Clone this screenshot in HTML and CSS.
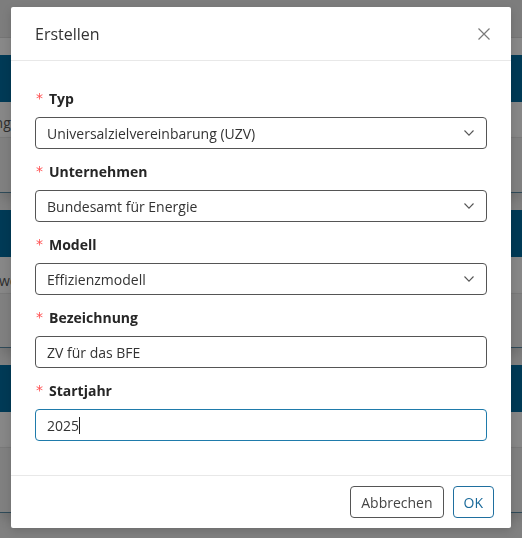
FILE: index.html
```html
<!DOCTYPE html>
<html lang="de">
<head>
<meta charset="utf-8">
<link rel="stylesheet" href="styles.css">
</head>
<body>
<div class="page">
  <div class="band top"></div>
  <div class="band light"></div>
  <div class="bar"></div>
  <div class="row"><span class="rowtext">Vereinbarung</span></div>
  <div class="band filler"></div>
  <div class="bar"></div>
  <div class="row r2"><span class="rowtext t2">Bewertung</span></div>
  <div class="band filler f2"></div>
  <div class="bar"></div>
  <div class="row"></div>
  <div class="band filler last"></div>
</div>

<div class="overlay">
  <div class="dialog">
    <div class="dlg-header">
      <span class="dlg-title">Erstellen</span>
      <svg class="close" width="12" height="12" viewBox="0 0 12 12"><path d="M0.5 0.5 L11.5 11.5 M11.5 0.5 L0.5 11.5" stroke="#7a7a7a" stroke-width="1.2" fill="none"/></svg>
    </div>
    <div class="dlg-body">
      <div class="item">
        <div class="label"><span class="req">*</span>Typ</div>
        <div class="field select">
          <span>Universalzielvereinbarung (UZV)</span>
          <svg class="chev" width="10" height="6" viewBox="0 0 10 6"><path d="M0.5 0.5 L5 5.2 L9.5 0.5" stroke="#555" stroke-width="1.1" fill="none"/></svg>
        </div>
      </div>
      <div class="item">
        <div class="label"><span class="req">*</span>Unternehmen</div>
        <div class="field select">
          <span>Bundesamt für Energie</span>
          <svg class="chev" width="10" height="6" viewBox="0 0 10 6"><path d="M0.5 0.5 L5 5.2 L9.5 0.5" stroke="#555" stroke-width="1.1" fill="none"/></svg>
        </div>
      </div>
      <div class="item">
        <div class="label"><span class="req">*</span>Modell</div>
        <div class="field select">
          <span>Effizienzmodell</span>
          <svg class="chev" width="10" height="6" viewBox="0 0 10 6"><path d="M0.5 0.5 L5 5.2 L9.5 0.5" stroke="#555" stroke-width="1.1" fill="none"/></svg>
        </div>
      </div>
      <div class="item">
        <div class="label"><span class="req">*</span>Bezeichnung</div>
        <div class="field"><span>ZV für das BFE</span></div>
      </div>
      <div class="item">
        <div class="label"><span class="req">*</span>Startjahr</div>
        <div class="field focused"><span>2025</span><span class="caret"></span></div>
      </div>
    </div>
    <div class="dlg-footer">
      <button class="btn">Abbrechen</button>
      <button class="btn primary">OK</button>
    </div>
  </div>
</div>
</body>
</html>
```
FILE: styles.css
```css
html, body {
  margin: 0;
  padding: 0;
}
body {
  width: 522px;
  height: 538px;
  overflow: hidden;
  font-family: "Open Sans", "Noto Sans", sans-serif;
  background: #808080;
}
.page {
  display: flex;
  flex-direction: column;
}
.band.top {
  height: 37px;
  background: #7d7d7d;
  border-bottom: 1px solid #757575;
}
.band.light {
  height: 17px;
  background: #888888;
}
.bar {
  height: 47px;
  background: #003a56;
}
.row {
  height: 36px;
  box-sizing: border-box;
  padding-top: 11px;
  background: #878787;
  border-bottom: 1px solid #7a7a7a;
  display: flex;
  align-items: flex-start;
  overflow: hidden;
}
.row.r2 {
  height: 37px;
  padding-top: 14px;
}
.rowtext {
  font-size: 14px;
  line-height: 20px;
  color: #2e2e2e;
  white-space: nowrap;
  margin-left: -78px;
}
.rowtext.t2 {
  margin-left: -18px;
}
.band.filler {
  height: 54px;
  background: #808080;
  border-bottom: 1px solid #2f4a58;
  box-shadow: 0 6px 10px rgba(0,0,0,0.12);
  margin-bottom: 17px;
}
.band.filler.f2 {
  height: 53px;
}
.band.filler.last {
  height: 64px;
  margin-bottom: 0;
}

.overlay {
  position: fixed;
  inset: 0;
  display: flex;
  justify-content: center;
  align-items: flex-start;
  padding-top: 7px;
}
.dialog {
  width: 500px;
  height: 521px;
  background: #fff;
  border-radius: 2px;
  display: flex;
  flex-direction: column;
  box-shadow: 0 3px 10px rgba(0,0,0,0.15);
}
.dlg-header {
  height: 54px;
  box-sizing: border-box;
  padding: 0 21px 0 24px;
  display: flex;
  align-items: center;
  justify-content: space-between;
  border-bottom: 1px solid #e8e8e8;
}
.dlg-title {
  font-size: 16px;
  color: #333;
  line-height: 22px;
  margin-top: 1px;
}
.close {
  display: block;
  margin-top: 1px;
}
.dlg-body {
  flex: 1;
  padding: 27px 24px 0 24px;
}
.item {
  margin-bottom: 12px;
}
.label {
  font-size: 14px;
  font-weight: 700;
  color: #262626;
  line-height: 22px;
  height: 22px;
  margin-bottom: 7px;
  display: flex;
  align-items: center;
}
.req {
  color: #ff4d4f;
  font-weight: 400;
  font-size: 14px;
  margin-left: 1px;
  margin-right: 6px;
  font-family: "DejaVu Sans", sans-serif;
  line-height: 1;
  position: relative;
  top: -1px;
}
.field {
  height: 32px;
  box-sizing: border-box;
  border: 1px solid #555;
  border-radius: 4px;
  padding: 0 11px;
  display: flex;
  align-items: center;
  font-size: 14px;
  color: #333;
}
.field.select {
  justify-content: space-between;
}
.chev {
  display: block;
  margin-right: 1px;
}
.field.focused {
  border-color: #1f7bab;
}
.caret {
  display: inline-block;
  width: 1px;
  height: 17px;
  background: #222;
}
.dlg-footer {
  border-top: 1px solid #e8e8e8;
  padding: 10px 17px 10px 17px;
  display: flex;
  justify-content: flex-end;
  gap: 9px;
}
.btn {
  height: 32px;
  font-family: "Open Sans", "Noto Sans", sans-serif;
  font-size: 14px;
  color: #444;
  background: #fff;
  border: 1px solid #555;
  border-radius: 4px;
  padding: 0 10px;
  cursor: pointer;
}
.btn.primary {
  color: #1a6a9a;
  border-color: #1f6f9f;
}
```
